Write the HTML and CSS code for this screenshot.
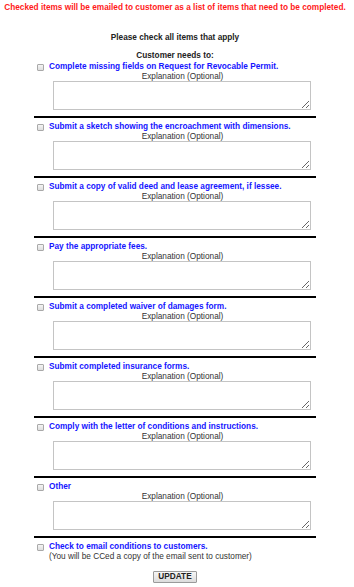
FILE: index.html
```html
<!DOCTYPE html>
<html>
<head>
<meta charset="utf-8">
<link rel="stylesheet" href="styles.css">
</head>
<body>
<div class="page">
  <p class="notice">Checked items will be emailed to customer as a list of items that need to be completed.</p>
  <p class="intro">Please check all items that apply</p>
  <div class="list">
    <p class="needs">Customer needs to:</p>

    <div class="item">
      <span class="box"></span>
      <div class="body">
        <div class="label">Complete missing fields on Request for Revocable Permit.</div>
        <div class="expl">Explanation (Optional)</div>
        <textarea class="ta"></textarea>
      </div>
    </div>

    <div class="item">
      <span class="box"></span>
      <div class="body">
        <div class="label">Submit a sketch showing the encroachment with dimensions.</div>
        <div class="expl">Explanation (Optional)</div>
        <textarea class="ta"></textarea>
      </div>
    </div>

    <div class="item">
      <span class="box"></span>
      <div class="body">
        <div class="label">Submit a copy of valid deed and lease agreement, if lessee.</div>
        <div class="expl">Explanation (Optional)</div>
        <textarea class="ta"></textarea>
      </div>
    </div>

    <div class="item">
      <span class="box"></span>
      <div class="body">
        <div class="label">Pay the appropriate fees.</div>
        <div class="expl">Explanation (Optional)</div>
        <textarea class="ta"></textarea>
      </div>
    </div>

    <div class="item">
      <span class="box"></span>
      <div class="body">
        <div class="label">Submit a completed waiver of damages form.</div>
        <div class="expl">Explanation (Optional)</div>
        <textarea class="ta"></textarea>
      </div>
    </div>

    <div class="item">
      <span class="box"></span>
      <div class="body">
        <div class="label">Submit completed insurance forms.</div>
        <div class="expl">Explanation (Optional)</div>
        <textarea class="ta"></textarea>
      </div>
    </div>

    <div class="item">
      <span class="box"></span>
      <div class="body">
        <div class="label">Comply with the letter of conditions and instructions.</div>
        <div class="expl">Explanation (Optional)</div>
        <textarea class="ta"></textarea>
      </div>
    </div>

    <div class="item">
      <span class="box"></span>
      <div class="body">
        <div class="label">Other</div>
        <div class="expl">Explanation (Optional)</div>
        <textarea class="ta"></textarea>
      </div>
    </div>

    <div class="item last">
      <span class="box"></span>
      <div class="body">
        <div class="label">Check to email conditions to customers.</div>
        <div class="note">(You will be CCed a copy of the email sent to customer)</div>
      </div>
    </div>
  </div>
  <div class="actions">
    <button class="btn" type="button">UPDATE</button>
  </div>
</div>
</body>
</html>
```

FILE: styles.css
```css
html, body {
  margin: 0;
  padding: 0;
  background: #ffffff;
}

body {
  font-family: "Liberation Sans", Arial, sans-serif;
  font-size: 8.25px;
  line-height: 10px;
  color: #222222;
}

.page {
  width: 350px;
  padding-top: 3px;
}

.notice {
  margin: 0;
  text-align: center;
  font-weight: bold;
  color: #ff1a1a;
  white-space: nowrap;
}

.intro {
  margin: 20px 0 0;
  text-align: center;
  font-weight: bold;
}

.list {
  width: 282px;
  margin: 8px auto 0;
}

.needs {
  margin: 0;
  text-align: center;
  font-weight: bold;
  height: 11px;
}

.item {
  display: flex;
  align-items: flex-start;
  border-bottom: 2px solid #000000;
  padding-bottom: 6px;
  margin-bottom: 4px;
}

.item.last {
  border-bottom: none;
  padding-bottom: 0;
  margin-bottom: 0;
}

.box {
  flex: none;
  box-sizing: border-box;
  width: 7px;
  height: 7px;
  margin: 2px 5px 0 3px;
  border: 1px solid #a9a9a9;
  border-radius: 1px;
  background: linear-gradient(#f4f4f4, #dedede);
}

.body {
  flex: 1;
  min-width: 0;
}

.label {
  font-weight: bold;
  color: #1515ff;
}

.expl {
  text-align: center;
  color: #333333;
  height: 9px;
}

.note {
  color: #333333;
}

.ta {
  display: block;
  box-sizing: border-box;
  width: 258px;
  height: 29px;
  margin: 0 0 0 4px;
  padding: 0;
  border: 1px solid #c4c4c4;
  border-radius: 0;
  background: #ffffff;
  resize: both;
  outline: none;
}

.actions {
  display: flex;
  justify-content: center;
  margin-top: 9px;
}

.btn {
  box-sizing: border-box;
  height: 12px;
  padding: 0 4px;
  border: 1px solid #9a9a9a;
  border-radius: 1px;
  background: linear-gradient(#f6f6f6, #dcdcdc);
  font-family: "Liberation Sans", Arial, sans-serif;
  font-size: 8.25px;
  font-weight: bold;
  line-height: 10px;
  color: #222222;
}
```
